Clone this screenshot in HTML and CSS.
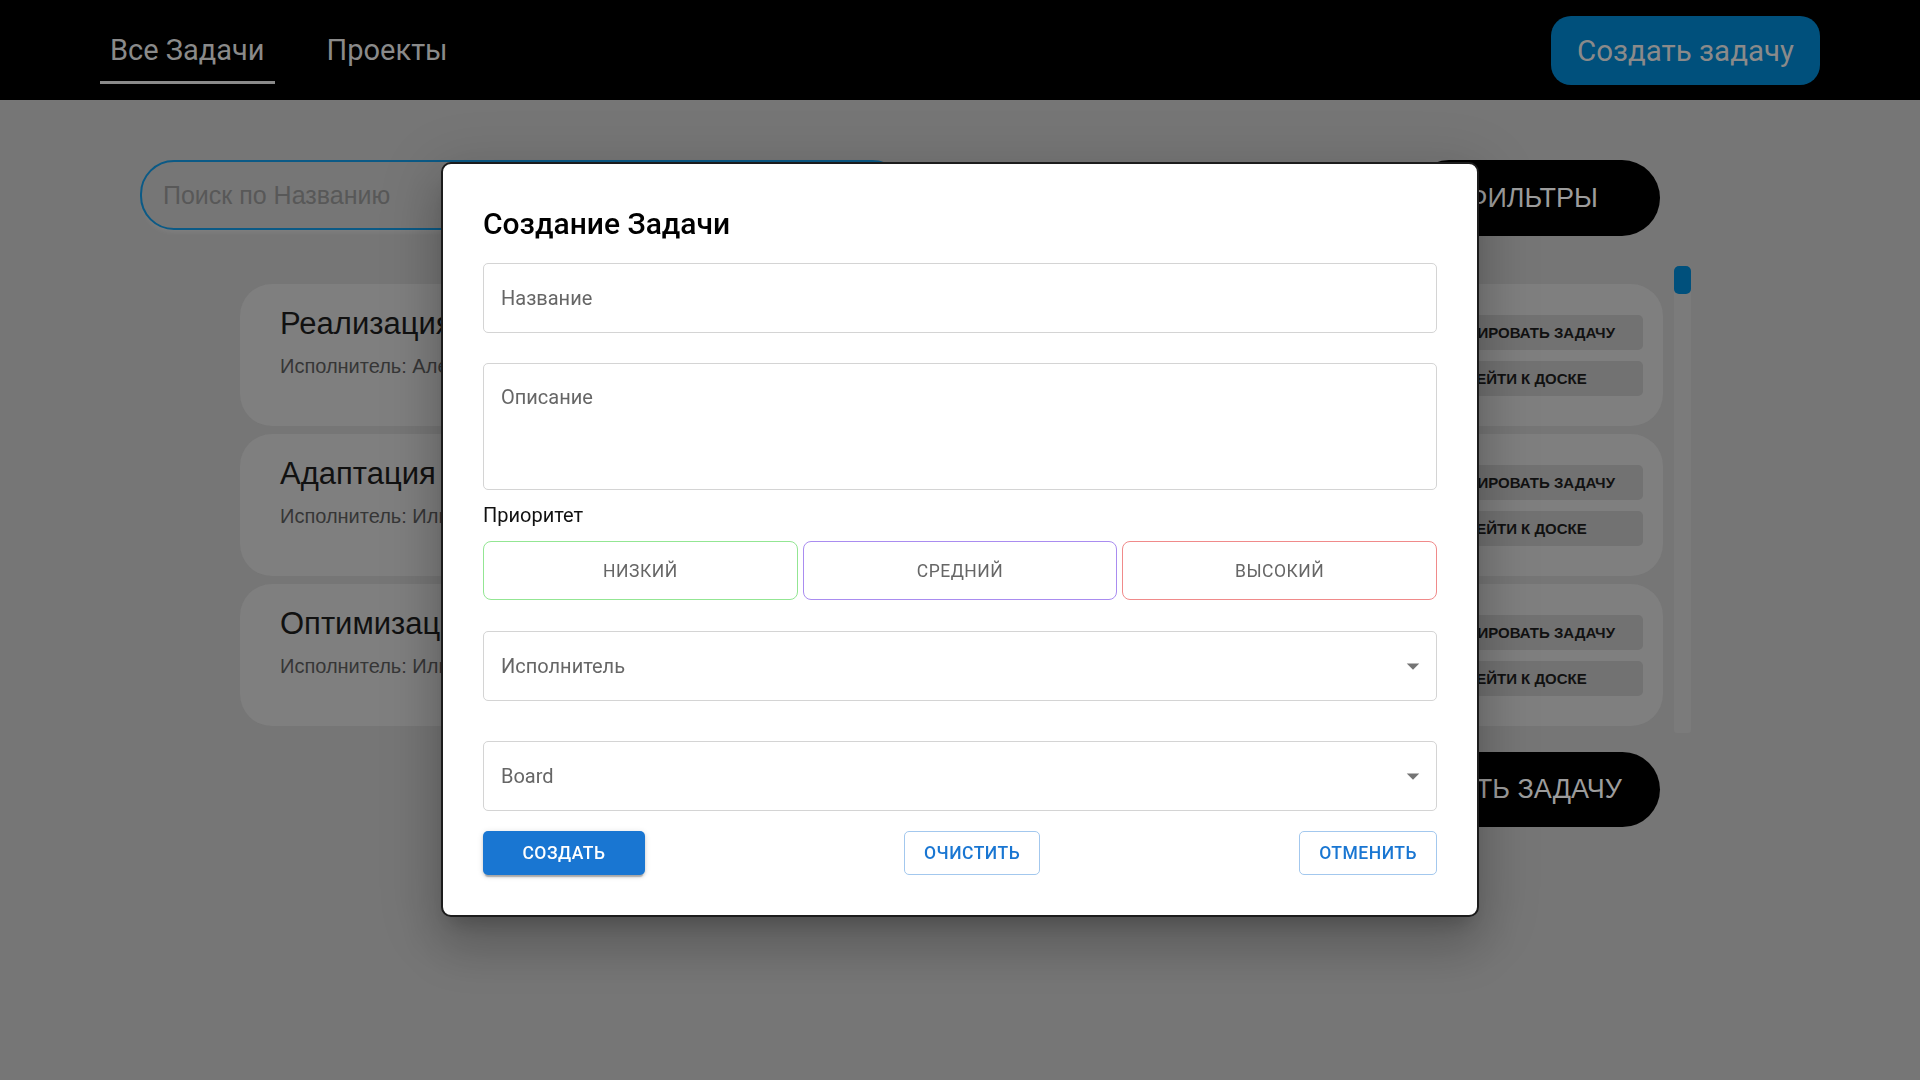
FILE: index.html
```html
<!DOCTYPE html>
<html lang="ru">
<head>
<meta charset="utf-8">
<title>Задачи</title>
<link rel="stylesheet" href="styles.css">
</head>
<body>
<header class="topbar">
  <nav class="tabs">
    <a class="tab tab-active">Все Задачи</a>
    <a class="tab">Проекты</a>
  </nav>
  <button class="header-btn">Создать задачу</button>
</header>

<main class="content">
  <div class="toolbar">
    <input class="search" type="text" placeholder="Поиск по Названию">
    <button class="pill-btn pill-filter">Фильтры</button>
  </div>

  <div class="list-wrap">
    <div class="list">
      <div class="card">
        <div class="card-info">
          <div class="card-title">Реализация новой функции поиска</div>
          <div class="card-sub">Исполнитель: Александра Волкова</div>
        </div>
        <div class="card-actions">
          <button class="card-btn">Редактировать задачу</button>
          <button class="card-btn">Перейти к доске</button>
        </div>
      </div>
      <div class="card">
        <div class="card-info">
          <div class="card-title">Адаптация интерфейса под мобильные</div>
          <div class="card-sub">Исполнитель: Илья Смирнов</div>
        </div>
        <div class="card-actions">
          <button class="card-btn">Редактировать задачу</button>
          <button class="card-btn">Перейти к доске</button>
        </div>
      </div>
      <div class="card">
        <div class="card-info">
          <div class="card-title">Оптимизация загрузки страниц</div>
          <div class="card-sub">Исполнитель: Илья Смирнов</div>
        </div>
        <div class="card-actions">
          <button class="card-btn">Редактировать задачу</button>
          <button class="card-btn">Перейти к доске</button>
        </div>
      </div>
    </div>
    <div class="scrollbar"><div class="scroll-thumb"></div></div>
  </div>

  <div class="bottom-row">
    <button class="pill-btn pill-wide">Создать задачу</button>
  </div>
</main>

<div class="modal" role="dialog">
  <h2 class="modal-title">Создание Задачи</h2>
  <input class="field field-name" type="text" placeholder="Название">
  <textarea class="field field-desc" placeholder="Описание"></textarea>
  <div class="prio-label">Приоритет</div>
  <div class="prio-row">
    <button class="prio prio-low">Низкий</button>
    <button class="prio prio-mid">Средний</button>
    <button class="prio prio-high">Высокий</button>
  </div>
  <div class="field select select-first">
    <span class="select-label">Исполнитель</span>
    <svg class="select-arrow" viewBox="0 0 24 24" width="30" height="30"><path d="M7 10l5 5 5-5z"/></svg>
  </div>
  <div class="field select select-second">
    <span class="select-label">Board</span>
    <svg class="select-arrow" viewBox="0 0 24 24" width="30" height="30"><path d="M7 10l5 5 5-5z"/></svg>
  </div>
  <div class="modal-actions">
    <button class="btn btn-contained">Создать</button>
    <button class="btn btn-outlined">Очистить</button>
    <button class="btn btn-outlined">Отменить</button>
  </div>
</div>
</body>
</html>
```
FILE: styles.css
```css
* { box-sizing: border-box; }

html, body {
  margin: 0;
  padding: 0;
  height: 100%;
}

body {
  background: #767676;
  font-family: "Liberation Sans", Arial, sans-serif;
  overflow: hidden;
}

/* ---------- header ---------- */
.topbar {
  height: 100px;
  background: #000;
  display: flex;
  align-items: flex-start;
  justify-content: space-between;
  padding: 0 100px;
}

.tabs {
  display: flex;
  gap: 42px;
}

.tab {
  font-family: Roboto, sans-serif;
  font-size: 29px;
  color: #8a8a8a;
  height: 84px;
  padding: 18px 10px 0;
  display: flex;
  align-items: center;
  border-bottom: 3px solid transparent;
}

.tab-active {
  border-bottom-color: #8a8a8a;
}

.header-btn {
  margin-top: 16px;
  height: 69px;
  padding: 0 26px;
  border: none;
  border-radius: 20px;
  background: #00507c;
  color: #8a8a8a;
  font-family: Roboto, sans-serif;
  font-size: 29.5px;
}

/* ---------- content ---------- */
.content {
  padding: 60px 260px 0 140px;
}

.toolbar {
  display: flex;
  align-items: flex-start;
  justify-content: space-between;
}

.search {
  width: 766px;
  height: 70px;
  border: 2px solid #0b5a86;
  border-radius: 34px;
  background: #767676;
  padding: 0 21px;
  font-family: "Liberation Sans", Arial, sans-serif;
  font-size: 25px;
  color: #333;
  outline: none;
  box-shadow: 0 5px 4px -2px rgba(255, 255, 255, 0.06);
}

.search::placeholder {
  color: #585858;
  opacity: 1;
}

.pill-btn {
  height: 76px;
  padding: 0 56px;
  border: none;
  border-radius: 38px;
  background: #000;
  color: #9c9c9c;
  font-family: "Liberation Sans", Arial, sans-serif;
  font-size: 27px;
  text-transform: uppercase;
}

.pill-filter {
  padding: 0 62px 0 56px;
}

.pill-wide {
  height: 75px;
  padding: 0 38px;
}

.list-wrap {
  display: flex;
  gap: 11px;
  margin: 30px -31px 0 100px;
  height: 467px;
}

.list {
  flex: 1;
  display: flex;
  flex-direction: column;
  gap: 8px;
  padding-top: 18px;
}

.card {
  height: 142px;
  background: #7f7f7f;
  border-radius: 32px;
  padding: 0 20px 0 40px;
  display: flex;
  align-items: center;
  justify-content: space-between;
}

.card-info {
  align-self: flex-start;
  padding-top: 22px;
  display: flex;
  flex-direction: column;
  gap: 12px;
}

.card-title {
  font-size: 31px;
  line-height: 36px;
  color: #111;
}

.card-sub {
  font-size: 20px;
  line-height: 24px;
  color: #363636;
}

.card-actions {
  display: flex;
  flex-direction: column;
  gap: 11px;
}

.card-btn {
  height: 35px;
  padding: 0 28px;
  border: none;
  border-radius: 5px;
  background: #727272;
  color: #111;
  font-family: "Liberation Sans", Arial, sans-serif;
  font-size: 15px;
  font-weight: bold;
  text-transform: uppercase;
}

.scrollbar {
  width: 17px;
  background: #7b7b7b;
  border-radius: 3px;
}

.scroll-thumb {
  height: 28px;
  background: #00507c;
  border-radius: 5px;
}

.bottom-row {
  display: flex;
  justify-content: flex-end;
  margin-top: 19px;
}

/* ---------- modal ---------- */
.modal {
  position: fixed;
  left: 441px;
  top: 162px;
  width: 1038px;
  height: 755px;
  background: #fff;
  border: 2px solid #1c1c1c;
  border-radius: 10px;
  padding: 40px;
  font-family: Roboto, sans-serif;
  box-shadow: 0 14px 19px -9px rgba(0, 0, 0, 0.2),
              0 30px 48px 4px rgba(0, 0, 0, 0.14),
              0 11px 58px 10px rgba(0, 0, 0, 0.12);
}

.modal-title {
  margin: 0;
  font-size: 30px;
  line-height: 40px;
  font-weight: 500;
  color: #000;
}

.field {
  display: block;
  width: 100%;
  height: 70px;
  border: 1px solid #d4d4d4;
  border-radius: 5px;
  background: #fff;
  padding: 0 17px;
  font-family: Roboto, sans-serif;
  font-size: 20px;
  color: #222;
  outline: none;
}

.field::placeholder {
  color: #666;
  opacity: 1;
}

.field-name {
  margin-top: 19px;
}

.field-desc {
  margin-top: 30px;
  height: 127px;
  padding-top: 19px;
  line-height: 28px;
  resize: none;
}

.prio-label {
  margin-top: 10px;
  font-size: 20px;
  line-height: 30px;
  color: #111;
}

.prio-row {
  display: flex;
  gap: 5px;
  margin-top: 11px;
}

.prio {
  flex: 1;
  height: 59px;
  background: #fff;
  border: 1.5px solid #ccc;
  border-radius: 8px;
  font-family: Roboto, sans-serif;
  font-size: 17.5px;
  letter-spacing: 0.5px;
  text-transform: uppercase;
  color: #666;
}

.prio-low { border-color: #93e693; }
.prio-mid { border-color: #a98cf0; }
.prio-high { border-color: #f08a8a; }

.select {
  display: flex;
  align-items: center;
  justify-content: space-between;
  padding-right: 8px;
}

.select-first { margin-top: 31px; }
.select-second { margin-top: 40px; }

.select-label {
  color: #666;
}

.select-arrow {
  fill: #757575;
}

.modal-actions {
  margin-top: 20px;
  display: flex;
  justify-content: space-between;
  align-items: center;
}

.btn {
  height: 44px;
  border-radius: 5px;
  font-family: Roboto, sans-serif;
  font-size: 17.5px;
  font-weight: 500;
  letter-spacing: 0.5px;
  text-transform: uppercase;
}

.btn-contained {
  width: 162px;
  border: none;
  background: #1976d2;
  color: #fff;
  box-shadow: 0 4px 1px -2px rgba(0, 0, 0, 0.2),
              0 2px 3px 0 rgba(0, 0, 0, 0.14),
              0 1px 6px 0 rgba(0, 0, 0, 0.12);
}

.btn-outlined {
  padding: 0 19px;
  border: 1px solid #a3c8ee;
  background: #fff;
  color: #1976d2;
}
```
